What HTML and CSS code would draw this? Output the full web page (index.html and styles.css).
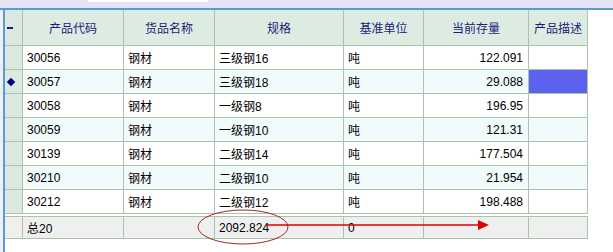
FILE: index.html
```html
<!DOCTYPE html>
<html>
<head>
<meta charset="utf-8">
<link rel="stylesheet" href="styles.css">
</head>
<body>
<div class="topbar"><div class="topbox"></div></div>
<div class="main">
  <div class="edge"></div>
  <div class="tablewrap">
    <div class="grid">
      <div class="hd ind"><span class="dash"></span></div>
      <div class="hd">产品代码</div>
      <div class="hd">货品名称</div>
      <div class="hd">规格</div>
      <div class="hd">基准单位</div>
      <div class="hd">当前存量</div>
      <div class="hd">产品描述</div>

      <div class="ind"></div>
      <div class="c">30056</div><div class="c">钢材</div><div class="c">三级钢16</div><div class="c">吨</div><div class="c r">122.091</div><div class="c"></div>

      <div class="ind cur"><span class="diamond"></span></div>
      <div class="c alt">30057</div><div class="c alt">钢材</div><div class="c alt">三级钢18</div><div class="c alt">吨</div><div class="c alt r">29.088</div><div class="c sel"></div>

      <div class="ind"></div>
      <div class="c">30058</div><div class="c">钢材</div><div class="c">一级钢8</div><div class="c">吨</div><div class="c r">196.95</div><div class="c"></div>

      <div class="ind"></div>
      <div class="c alt">30059</div><div class="c alt">钢材</div><div class="c alt">一级钢10</div><div class="c alt">吨</div><div class="c alt r">121.31</div><div class="c alt"></div>

      <div class="ind"></div>
      <div class="c">30139</div><div class="c">钢材</div><div class="c">二级钢14</div><div class="c">吨</div><div class="c r">177.504</div><div class="c"></div>

      <div class="ind"></div>
      <div class="c alt">30210</div><div class="c alt">钢材</div><div class="c alt">二级钢10</div><div class="c alt">吨</div><div class="c alt r">21.954</div><div class="c alt"></div>

      <div class="ind"></div>
      <div class="c">30212</div><div class="c">钢材</div><div class="c">二级钢12</div><div class="c">吨</div><div class="c r">198.488</div><div class="c"></div>
    </div>
    <div class="grid total">
      <div class="t"></div>
      <div class="t">总20</div><div class="t"></div><div class="t">2092.824</div><div class="t">0</div><div class="t"></div><div class="t"></div>
    </div>
  </div>
</div>
<svg class="annot" width="613" height="252" viewBox="0 0 613 252">
  <ellipse cx="243" cy="227" rx="45" ry="17" fill="none" stroke="#a3262b" stroke-width="1"/>
  <line x1="266" y1="225" x2="479" y2="225" stroke="#e00000" stroke-width="1.5"/>
  <polygon points="478,220 489,225 478,230" fill="#e00000"/>
</svg>
</body>
</html>
```

FILE: styles.css
```css
html, body {
  margin: 0;
  padding: 0;
  background: #ffffff;
  width: 613px;
  height: 252px;
  overflow: hidden;
  position: relative;
  font-family: "Liberation Sans", "Noto Sans CJK SC", sans-serif;
  font-size: 12px;
}
.topbar {
  height: 8px;
  background: #e4e4f6;
  border-bottom: 2px solid #5b9bd3;
  position: relative;
}
.topbox {
  position: absolute;
  left: 88px;
  top: 0;
  width: 120px;
  height: 2px;
  background: #ffffff;
}
.main {
  display: flex;
  height: 242px;
}
.edge {
  width: 3px;
  background: #eef0f8;
  border-right: 2px solid #5b9bd3;
  flex: none;
}
.tablewrap {
  display: flex;
  flex-direction: column;
  gap: 2px;
  align-self: flex-start;
}
.grid {
  display: grid;
  grid-template-columns: 17px 100px 90px 128px 79px 104px 58px;
  grid-template-rows: 35px repeat(7, 23px);
  gap: 1px;
  background: #a9c5a9;
  padding: 0 1px 1px 0;
}
.grid.total {
  grid-template-rows: 21px;
  padding-top: 1px;
}
.grid > div {
  display: flex;
  align-items: center;
  white-space: nowrap;
  overflow: hidden;
}
.hd {
  background: #dcece3;
  color: #1c1c78;
  justify-content: center;
}
.ind {
  background: #dbe9e0;
  justify-content: center;
}
.ind.cur {
  justify-content: flex-start;
  padding-left: 3px;
}
.hd.ind {
  justify-content: flex-start;
  padding-left: 2px;
}
.dash {
  display: block;
  width: 6px;
  height: 2px;
  background: #1c1c78;
}
.diamond {
  display: block;
  width: 6px;
  height: 6px;
  margin-top: 1px;
  background: #000080;
  transform: rotate(45deg);
}
.c {
  background: #ffffff;
  color: #000000;
  padding: 0 4px;
}
.c.alt {
  background: #f1fbfb;
}
.c.r {
  justify-content: flex-end;
  padding-right: 5px;
}
.c.sel {
  background: #5c62ee;
}
.t {
  background: #efefef;
  color: #000000;
  padding: 0 4px;
}
.annot {
  position: absolute;
  left: 0;
  top: 0;
  pointer-events: none;
}
```
